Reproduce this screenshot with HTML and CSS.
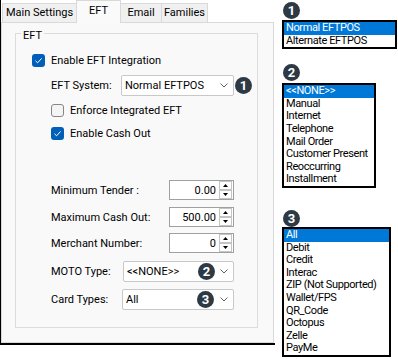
FILE: index.html
```html
<!DOCTYPE html>
<html lang="en">
<head>
    <meta charset="UTF-8">
    <title>EFT Settings</title>
    <link rel="stylesheet" href="styles.css">
</head>
<body>
    <div class="page">
        <div class="dialog">
            <div class="tabs">
                <div class="tab tab-main">Main Settings</div>
                <div class="tab tab-eft active">EFT</div>
                <div class="tab tab-email">Email</div>
                <div class="tab tab-families">Families</div>
            </div>
            <div class="panel">
                <div class="group">
                    <div class="group-title">EFT</div>

                    <div class="row row-enable">
                        <svg class="check" width="13" height="13" viewBox="0 0 13 13"><rect x="0" y="0" width="13" height="13" rx="3" fill="#005fb8"/><polyline points="3.5,6.8 5.6,8.8 9.6,4.4" fill="none" stroke="#fff" stroke-width="1"/></svg>
                        <span>Enable EFT Integration</span>
                    </div>

                    <div class="row row-system">
                        <span class="label label-system">EFT System:</span>
                        <div class="combo combo-system">
                            <span>Normal EFTPOS</span>
                            <svg class="chev" width="8" height="5" viewBox="0 0 8 5"><polyline points="0.5,0.5 4,4 7.5,0.5" fill="none" stroke="#606060" stroke-width="1"/></svg>
                        </div>
                        <span class="badge badge-inline">1</span>
                    </div>

                    <div class="row row-sub row-enforce">
                        <svg class="check" width="13" height="13" viewBox="0 0 13 13"><rect x="0.5" y="0.5" width="12" height="12" rx="2.5" fill="#f4f4f4" stroke="#858585" stroke-width="1"/></svg>
                        <span>Enforce Integrated EFT</span>
                    </div>

                    <div class="row row-sub row-cash">
                        <svg class="check" width="13" height="13" viewBox="0 0 13 13"><rect x="0" y="0" width="13" height="13" rx="3" fill="#005fb8"/><polyline points="3.5,6.8 5.6,8.8 9.6,4.4" fill="none" stroke="#fff" stroke-width="1"/></svg>
                        <span>Enable Cash Out</span>
                    </div>

                    <div class="row row-field row-min">
                        <span class="label label-num">Minimum Tender :</span>
                        <div class="spin">
                            <span class="spin-value">0.00</span>
                            <svg class="spin-buttons" width="13" height="18" viewBox="0 0 13 18"><rect x="0.5" y="0.5" width="12" height="8" fill="#fff" stroke="#c4c4c4"/><rect x="0.5" y="9.5" width="12" height="8" fill="#fff" stroke="#c4c4c4"/><polygon points="4,6 9,6 6.5,3" fill="#000"/><polygon points="4,12 9,12 6.5,15" fill="#000"/></svg>
                        </div>
                    </div>

                    <div class="row row-field row-max">
                        <span class="label label-num">Maximum Cash Out:</span>
                        <div class="spin">
                            <span class="spin-value">500.00</span>
                            <svg class="spin-buttons" width="13" height="18" viewBox="0 0 13 18"><rect x="0.5" y="0.5" width="12" height="8" fill="#fff" stroke="#c4c4c4"/><rect x="0.5" y="9.5" width="12" height="8" fill="#fff" stroke="#c4c4c4"/><polygon points="4,6 9,6 6.5,3" fill="#000"/><polygon points="4,12 9,12 6.5,15" fill="#000"/></svg>
                        </div>
                    </div>

                    <div class="row row-field row-merchant">
                        <span class="label label-num">Merchant Number:</span>
                        <div class="spin">
                            <span class="spin-value">0</span>
                            <svg class="spin-buttons" width="13" height="18" viewBox="0 0 13 18"><rect x="0.5" y="0.5" width="12" height="8" fill="#fff" stroke="#c4c4c4"/><rect x="0.5" y="9.5" width="12" height="8" fill="#fff" stroke="#c4c4c4"/><polygon points="4,6 9,6 6.5,3" fill="#000"/><polygon points="4,12 9,12 6.5,15" fill="#000"/></svg>
                        </div>
                    </div>

                    <div class="row row-field row-moto">
                        <span class="label label-moto">MOTO Type:</span>
                        <div class="combo combo-moto">
                            <span>&lt;&lt;NONE&gt;&gt;</span>
                            <svg class="chev" width="8" height="5" viewBox="0 0 8 5"><polyline points="0.5,0.5 4,4 7.5,0.5" fill="none" stroke="#606060" stroke-width="1"/></svg>
                            <span class="badge badge-over badge-moto">2</span>
                        </div>
                    </div>

                    <div class="row row-field row-card">
                        <span class="label label-card">Card Types:</span>
                        <div class="combo combo-card">
                            <span>All</span>
                            <svg class="chev" width="8" height="5" viewBox="0 0 8 5"><polyline points="0.5,0.5 4,4 7.5,0.5" fill="none" stroke="#606060" stroke-width="1"/></svg>
                            <span class="badge badge-over badge-card">3</span>
                        </div>
                    </div>
                </div>
            </div>
        </div>

        <div class="side">
            <span class="badge badge-side badge-s1">1</span>
            <ul class="list list-system">
                <li class="selected">Normal EFTPOS</li>
                <li>Alternate EFTPOS</li>
            </ul>

            <span class="badge badge-side badge-s2">2</span>
            <ul class="list list-moto">
                <li class="selected">&lt;&lt;NONE&gt;&gt;</li>
                <li>Manual</li>
                <li>Internet</li>
                <li>Telephone</li>
                <li>Mail Order</li>
                <li>Customer Present</li>
                <li>Reoccurring</li>
                <li>Installment</li>
            </ul>

            <span class="badge badge-side badge-s3">3</span>
            <ul class="list list-card">
                <li class="selected">All</li>
                <li>Debit</li>
                <li>Credit</li>
                <li>Interac</li>
                <li>ZIP (Not Supported)</li>
                <li>Wallet/FPS</li>
                <li>QR_Code</li>
                <li>Octopus</li>
                <li>Zelle</li>
                <li>PayMe</li>
            </ul>
        </div>
    </div>
</body>
</html>
```

FILE: styles.css
```css
* {
    margin: 0;
    padding: 0;
    box-sizing: border-box;
}

body {
    font-family: Roboto, 'Liberation Sans', sans-serif;
    font-size: 11px;
    color: #000;
    background: #fff;
}

.page {
    display: flex;
    align-items: flex-start;
}

/* Left dialog */
.dialog {
    width: 275px;
    height: 345px;
    border-left: 1px solid #000;
    border-bottom: 2px solid #000;
}

.tabs {
    height: 22px;
    display: flex;
    align-items: flex-end;
    padding-left: 1px;
}

.tab {
    height: 19px;
    line-height: 18px;
    text-align: center;
    background: #f0f0f0;
    border: 1px solid #d9d9d9;
    border-bottom: none;
    white-space: nowrap;
}

.tab-main { width: 75px; }
.tab-eft { width: 45px; }
.tab-email { width: 42px; }
.tab-families { width: 47px; margin-left: -1px; }

.tab.active {
    height: 23px;
    line-height: 20px;
    margin: 0 -1px -1px -1px;
    background: #fafafa;
    position: relative;
    z-index: 1;
}

.panel {
    width: 273px;
    height: 321px;
    background: #f9f9f9;
    border: 1px solid #d9d9d9;
    padding: 10px 0 0 13px;
}

.group {
    width: 243px;
    height: 295px;
    border: 1px solid #dcdcdc;
}

.group-title {
    width: fit-content;
    margin: -5px 0 0 5px;
    padding: 0 2px;
    line-height: 13px;
    background: #f9f9f9;
}

.row {
    display: flex;
    align-items: center;
    white-space: nowrap;
}

.check {
    flex: none;
    margin-right: 6px;
}

.row-enable {
    height: 13px;
    margin-top: 12px;
    padding-left: 16px;
}

.row-system {
    height: 21px;
    margin-top: 8px;
    padding-left: 35px;
}

.row-sub {
    height: 13px;
    padding-left: 35px;
}

.row-enforce { margin-top: 8px; }
.row-cash { margin-top: 10px; }

.row-field {
    padding-left: 35px;
}

.row-min { height: 20px; margin-top: 40px; }
.row-max { height: 20px; margin-top: 7px; }
.row-merchant { height: 20px; margin-top: 6px; }
.row-moto { height: 21px; margin-top: 8px; }
.row-card { height: 21px; margin-top: 7px; }

.label-system { width: 70px; }
.label-num { width: 118px; }
.label-moto { width: 72px; }
.label-card { width: 71px; }

/* Combo boxes */
.combo {
    height: 21px;
    display: flex;
    align-items: center;
    justify-content: space-between;
    padding: 0 5px 0 3px;
    background: #fff;
    border: 1px solid #c8c8c8;
    border-radius: 2px;
    position: relative;
}

.combo-system { width: 113px; }
.combo-moto { width: 111px; }
.combo-card { width: 112px; }

.chev {
    flex: none;
}

/* Numeric spinners */
.spin {
    width: 65px;
    height: 20px;
    display: flex;
    align-items: center;
    justify-content: flex-end;
    padding-right: 1px;
    background: #fff;
    border: 1px solid #a0a0a0;
}

.spin-value {
    margin-right: 3px;
}

.spin-buttons {
    flex: none;
}

/* Numbered markers */
.badge {
    width: 17px;
    height: 17px;
    border-radius: 50%;
    background: #2d3944;
    color: #fff;
    font-weight: bold;
    font-size: 13px;
    line-height: 17px;
    text-align: center;
    flex: none;
}

.badge-inline {
    margin-left: 1px;
}

.badge-over {
    position: absolute;
    top: 1px;
}

.badge-moto { right: 18px; }
.badge-card { right: 19px; }

/* Dropdown lists on the right */
.side {
    margin-left: 7px;
    display: flex;
    flex-direction: column;
    align-items: flex-start;
}

.badge-side {
    margin-left: 1px;
}

.badge-s1 { margin-top: 2px; }
.badge-s2 { margin-top: 15px; }
.badge-s3 { margin-top: 22px; }

.list {
    list-style: none;
    background: #fff;
    border: 2px solid #000;
}

.list li {
    height: 12.6px;
    line-height: 12.6px;
    padding-left: 2px;
    letter-spacing: -0.4px;
    white-space: nowrap;
}

.list li.selected {
    background: #0078d7;
    color: #fff;
}

.list-system { width: 115px; margin-top: 1px; }
.list-moto { width: 94px; margin-top: 2px; }
.list-card { width: 109px; margin-top: 0; }
```
